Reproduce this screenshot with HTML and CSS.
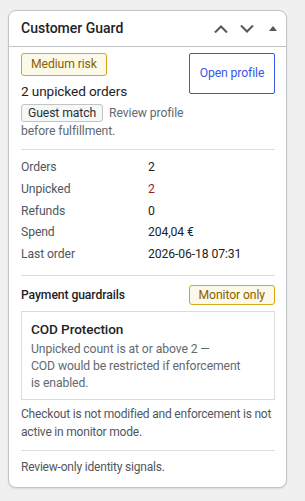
FILE: index.html
```html
<!DOCTYPE html>
<html lang="en">
<head>
    <meta charset="UTF-8" />
    <meta name="viewport" content="width=device-width, initial-scale=1.0"/>
    <title>Customer Guard</title>
    <link rel="stylesheet" href="styles.css">
</head>
<body>
    <div class="postbox">
        <div class="postbox-header">
            <h2 class="hndle">Customer Guard</h2>
            <div class="handle-actions">
                <button class="handle-btn" aria-label="Move up">
                    <svg width="14" height="8" viewBox="0 0 14 8"><path d="M1 7.5 L7 1.5 L13 7.5" fill="none" stroke="#50575e" stroke-width="2"/></svg>
                </button>
                <button class="handle-btn" aria-label="Move down">
                    <svg width="14" height="8" viewBox="0 0 14 8"><path d="M1 0.5 L7 6.5 L13 0.5" fill="none" stroke="#50575e" stroke-width="2"/></svg>
                </button>
                <button class="handle-btn" aria-label="Toggle panel">
                    <svg width="8" height="5" viewBox="0 0 8 5"><path d="M0 5 L4 0 L8 5 Z" fill="#50575e"/></svg>
                </button>
            </div>
        </div>
        <div class="inside">
            <div class="summary">
                <div class="summary-main">
                    <span class="badge badge-warn">Medium risk</span>
                    <div class="unpicked">2 unpicked orders</div>
                    <div class="match-line"><span class="chip">Guest match</span> Review profile before fulfillment.</div>
                </div>
                <a class="btn-outline" href="#">Open profile</a>
            </div>

            <hr class="sep">

            <dl class="stats">
                <dt>Orders</dt><dd>2</dd>
                <dt>Unpicked</dt><dd class="is-bad">2</dd>
                <dt>Refunds</dt><dd>0</dd>
                <dt>Spend</dt><dd>204,04 €</dd>
                <dt>Last order</dt><dd>2026-06-18 07:31</dd>
            </dl>

            <hr class="sep">

            <div class="guard-head">
                <span class="guard-title">Payment guardrails</span>
                <span class="badge badge-warn badge-sm">Monitor only</span>
            </div>
            <div class="rule-box">
                <div class="rule-title">COD Protection</div>
                <p class="rule-text">
                    <span class="rule-cond">Unpicked count is at or above 2 —</span>
                    <span class="rule-effect">COD would be restricted if enforcement is enabled.</span>
                </p>
            </div>
            <p class="note">Checkout is not modified and enforcement is not active in monitor mode.</p>

            <hr class="sep">

            <p class="note footer-note">Review-only identity signals.</p>
        </div>
    </div>
</body>
</html>
```

FILE: styles.css
```css
body {
    font-family: Roboto, "Noto Sans", sans-serif;
    font-size: 12.2px;
    letter-spacing: -0.1px;
    color: #1d2327;
    background: #f0f0f1;
    margin: 0;
    padding: 10px 8px;
}
.postbox {
    width: 279px;
    box-sizing: border-box;
    background: #fff;
    border: 1px solid #c3c4c7;
    border-radius: 8px;
    box-shadow: 0 1px 2px rgba(0,0,0,0.1);
}
.postbox-header {
    display: flex;
    align-items: center;
    justify-content: space-between;
    height: 35px;
    border-bottom: 1px solid #c3c4c7;
}
.hndle {
    margin: 0;
    padding-left: 12px;
    font-size: 14px;
    font-weight: 500;
    letter-spacing: 0;
    line-height: 1.4;
}
.handle-actions {
    display: flex;
    align-self: stretch;
}
.handle-btn {
    width: 26px;
    padding: 0;
    border: none;
    background: none;
    display: flex;
    align-items: center;
    justify-content: center;
    cursor: pointer;
}
.inside {
    padding: 6px 11px 11px 12px;
}
.summary {
    display: flex;
    gap: 4px;
    align-items: flex-start;
}
.summary-main {
    flex: 1;
}
.badge {
    display: inline-block;
    border: 1px solid #dba617;
    border-radius: 3px;
    background: #fcf9e8;
    color: #8a6100;
    padding: 0 9px;
    line-height: 21px;
}
.badge-sm {
    line-height: 18px;
}
.unpicked {
    font-size: 13.6px;
    line-height: 20px;
    margin-top: 5px;
}
.match-line {
    color: #646970;
    line-height: 18px;
    margin-top: 3px;
}
.chip {
    display: inline-block;
    background: #f6f7f7;
    border: 1px solid #c3c4c7;
    border-radius: 3px;
    color: #2c3338;
    padding: 0 6px;
    line-height: 16px;
    margin-right: 3px;
}
.btn-outline {
    width: 86px;
    box-sizing: border-box;
    border: 1px solid #3858e9;
    border-radius: 2px;
    color: #3858e9;
    text-decoration: none;
    text-align: center;
    line-height: 19px;
    padding: 10px 0;
}
.sep {
    border: none;
    border-top: 1px solid #dcdcde;
    margin: 9px 0 7px 0;
}
.stats {
    display: grid;
    grid-template-columns: 127px 1fr;
    margin: 0;
    line-height: 21.75px;
}
.stats dt {
    color: #50575e;
}
.stats dd {
    margin: 0;
}
.stats dd.is-bad {
    color: #8a2424;
}
.guard-head {
    display: flex;
    justify-content: space-between;
    align-items: center;
    margin-top: 9px;
}
.guard-title {
    font-weight: 500;
}
.rule-box {
    border: 1px solid #dcdcde;
    padding: 7px 9px 7px 9px;
    margin-top: 6px;
}
.rule-title {
    font-size: 13.6px;
    font-weight: 500;
    line-height: 20px;
}
.rule-text {
    margin: 2px 0 0 0;
    color: #646970;
    line-height: 17px;
}
.rule-cond,
.rule-effect {
    display: block;
    max-width: 216px;
}
.note {
    margin: 5px 0 0 0;
    color: #50575e;
    font-size: 12px;
    letter-spacing: -0.2px;
    line-height: 18px;
}
.footer-note {
    margin-top: 0;
}
```
